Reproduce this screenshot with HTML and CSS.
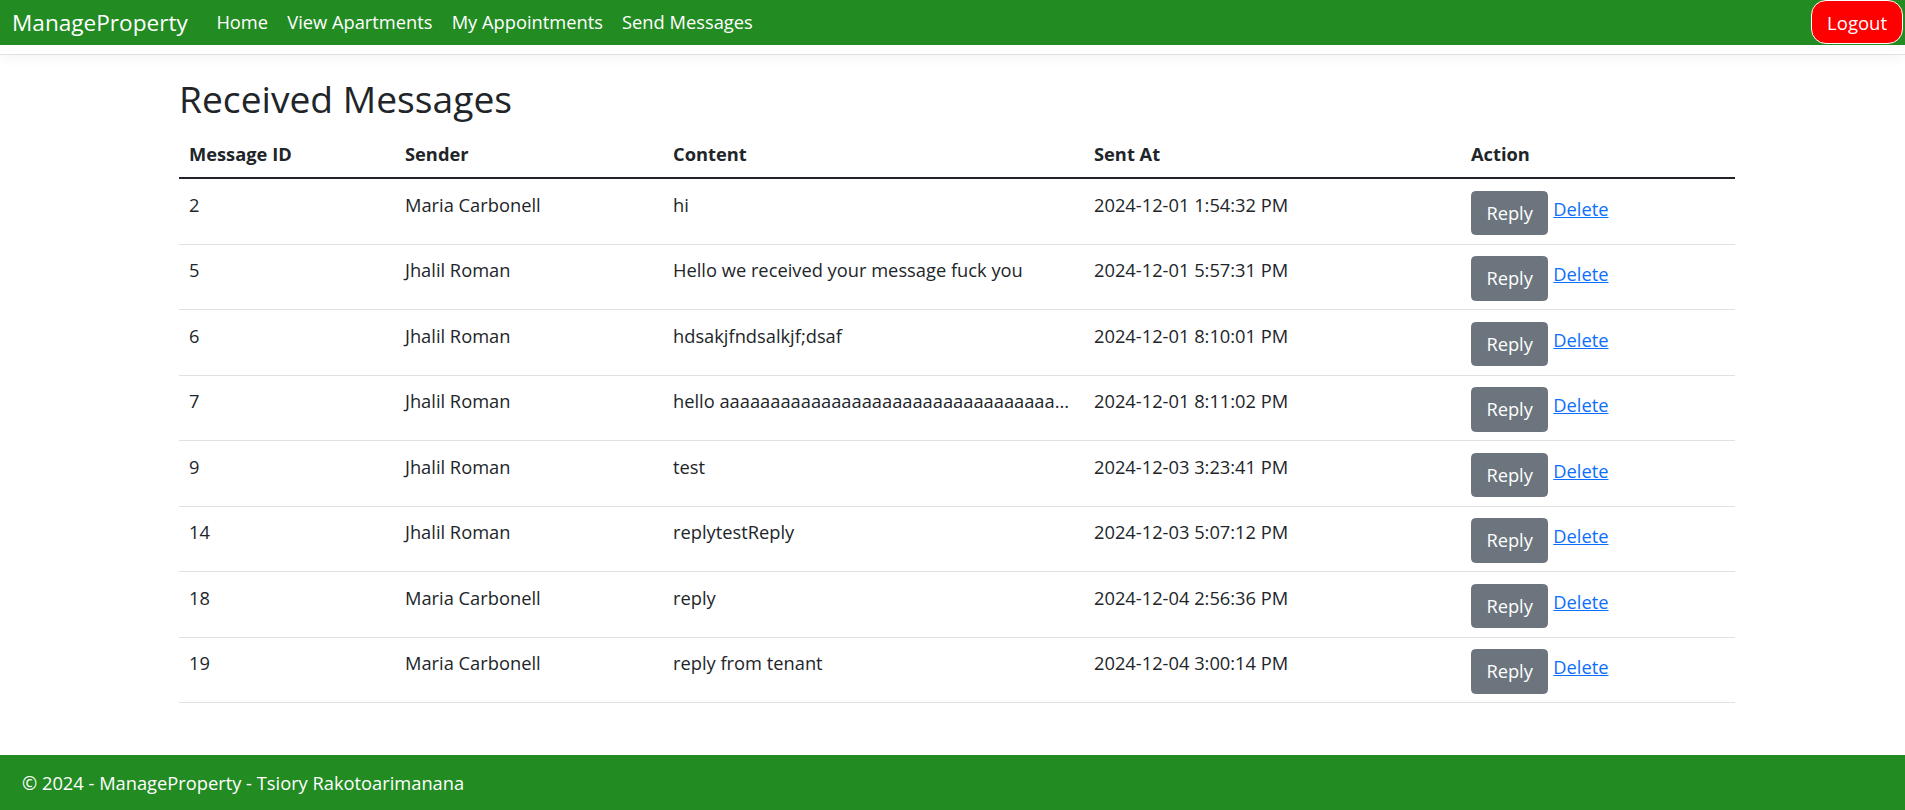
FILE: index.html
```html
<!DOCTYPE html>
<html lang="en">
<head>
<meta charset="utf-8">
<title>Received Messages - ManageProperty</title>
<link rel="stylesheet" href="styles.css">
</head>
<body>
<header class="site-header">
  <nav class="navbar">
    <a class="brand" href="#">ManageProperty</a>
    <ul class="nav-links">
      <li><a class="nav-link" href="#">Home</a></li>
      <li><a class="nav-link" href="#">View Apartments</a></li>
      <li><a class="nav-link" href="#">My Appointments</a></li>
      <li><a class="nav-link" href="#">Send Messages</a></li>
    </ul>
    <button class="logout" type="button">Logout</button>
  </nav>
</header>

<main class="container">
  <h2 class="page-title">Received Messages</h2>
  <table class="table">
    <colgroup>
      <col class="c-id"><col class="c-sender"><col class="c-content"><col class="c-sent"><col class="c-action">
    </colgroup>
    <thead>
      <tr><th>Message ID</th><th>Sender</th><th>Content</th><th>Sent At</th><th>Action</th></tr>
    </thead>
    <tbody>
      <tr><td>2</td><td>Maria Carbonell</td><td class="content">hi</td><td>2024-12-01 1:54:32 PM</td><td class="action"><div class="actions"><button class="btn-reply" type="button">Reply</button><a class="del" href="#">Delete</a></div></td></tr>
      <tr><td>5</td><td>Jhalil Roman</td><td class="content">Hello we received your message fuck you</td><td>2024-12-01 5:57:31 PM</td><td class="action"><div class="actions"><button class="btn-reply" type="button">Reply</button><a class="del" href="#">Delete</a></div></td></tr>
      <tr><td>6</td><td>Jhalil Roman</td><td class="content">hdsakjfndsalkjf;dsaf</td><td>2024-12-01 8:10:01 PM</td><td class="action"><div class="actions"><button class="btn-reply" type="button">Reply</button><a class="del" href="#">Delete</a></div></td></tr>
      <tr><td>7</td><td>Jhalil Roman</td><td class="content">hello aaaaaaaaaaaaaaaaaaaaaaaaaaaaaaaaa...</td><td>2024-12-01 8:11:02 PM</td><td class="action"><div class="actions"><button class="btn-reply" type="button">Reply</button><a class="del" href="#">Delete</a></div></td></tr>
      <tr><td>9</td><td>Jhalil Roman</td><td class="content">test</td><td>2024-12-03 3:23:41 PM</td><td class="action"><div class="actions"><button class="btn-reply" type="button">Reply</button><a class="del" href="#">Delete</a></div></td></tr>
      <tr><td>14</td><td>Jhalil Roman</td><td class="content">replytestReply</td><td>2024-12-03 5:07:12 PM</td><td class="action"><div class="actions"><button class="btn-reply" type="button">Reply</button><a class="del" href="#">Delete</a></div></td></tr>
      <tr><td>18</td><td>Maria Carbonell</td><td class="content">reply</td><td>2024-12-04 2:56:36 PM</td><td class="action"><div class="actions"><button class="btn-reply" type="button">Reply</button><a class="del" href="#">Delete</a></div></td></tr>
      <tr><td>19</td><td>Maria Carbonell</td><td class="content">reply from tenant</td><td>2024-12-04 3:00:14 PM</td><td class="action"><div class="actions"><button class="btn-reply" type="button">Reply</button><a class="del" href="#">Delete</a></div></td></tr>
    </tbody>
  </table>
</main>

<footer class="site-footer">
  <div class="footer-inner">&copy; 2024 - ManageProperty - Tsiory Rakotoarimanana</div>
</footer>
</body>
</html>
```

FILE: styles.css
```css
* { box-sizing: border-box; }

html, body { margin: 0; padding: 0; }

body {
  font-family: "Open Sans", "Noto Sans", "Liberation Sans", sans-serif;
  font-size: 18.3px;
  line-height: 28.8px;
  color: #212529;
  background: #fff;
  min-height: 100vh;
  display: flex;
  flex-direction: column;
}

/* Header / navbar */
.site-header {
  padding-bottom: 9px;
  border-bottom: 1px solid #dee2e6;
  box-shadow: 0 4px 12px rgba(0, 0, 0, 0.04);
}

.navbar {
  height: 45px;
  background: #228b22;
  display: flex;
  align-items: flex-start;
  padding-left: 12px;
}

.brand {
  color: #fff;
  text-decoration: none;
  font-size: 22.6px;
  line-height: 44px;
  padding-top: 1px;
  margin-right: 19px;
  white-space: nowrap;
}

.nav-links {
  list-style: none;
  margin: 0;
  padding: 0;
  display: flex;
  flex: 1;
}

.nav-link {
  display: block;
  color: #fff;
  text-decoration: none;
  font-size: 18.3px;
  line-height: 44px;
  padding: 0 9.6px;
  white-space: nowrap;
}

.logout {
  font-family: inherit;
  font-size: 18.5px;
  line-height: 41px;
  height: 44px;
  color: #fff;
  background: #ff0000;
  border: 1px solid #fff;
  border-radius: 15px;
  padding: 0 15px;
  margin-right: 2px;
  cursor: pointer;
}

/* Content */
.container {
  width: 1556px;
  margin-left: 179px;
}

.page-title {
  font-size: 37.2px;
  font-weight: 500;
  line-height: 43.2px;
  margin: 22px 0 8px;
  color: #212529;
}

.table {
  width: 100%;
  table-layout: fixed;
  border-collapse: collapse;
  vertical-align: top;
}

.c-id { width: 216px; }
.c-sender { width: 268px; }
.c-content { width: 421px; }
.c-sent { width: 377px; }
.c-action { width: 274px; }

.table th {
  text-align: left;
  font-weight: 700;
  padding: 12px 10px 8px;
  border-bottom: 2px solid #212529;
}

.table td {
  padding: 11.5px 10px 8.5px;
  border-bottom: 1px solid #dee2e6;
  vertical-align: top;
  white-space: nowrap;
}

.table td.content {
  overflow: hidden;
  text-overflow: ellipsis;
}

.actions {
  display: flex;
  align-items: flex-start;
}

.btn-reply {
  font-family: inherit;
  font-size: 18.3px;
  line-height: 28.8px;
  color: #fff;
  background: #6c757d;
  border: 1px solid #6c757d;
  border-radius: 4.5px;
  padding: 7px 14.4px;
  height: 44.5px;
  cursor: pointer;
}

.del {
  color: #0d6efd;
  text-decoration: underline;
  margin-left: 5px;
  margin-top: 4px;
}

/* Footer */
.site-footer {
  margin-top: auto;
  background: #228b22;
  color: #fff;
  height: 55px;
}

.footer-inner {
  line-height: 55px;
  padding-left: 22px;
  white-space: nowrap;
}
```
